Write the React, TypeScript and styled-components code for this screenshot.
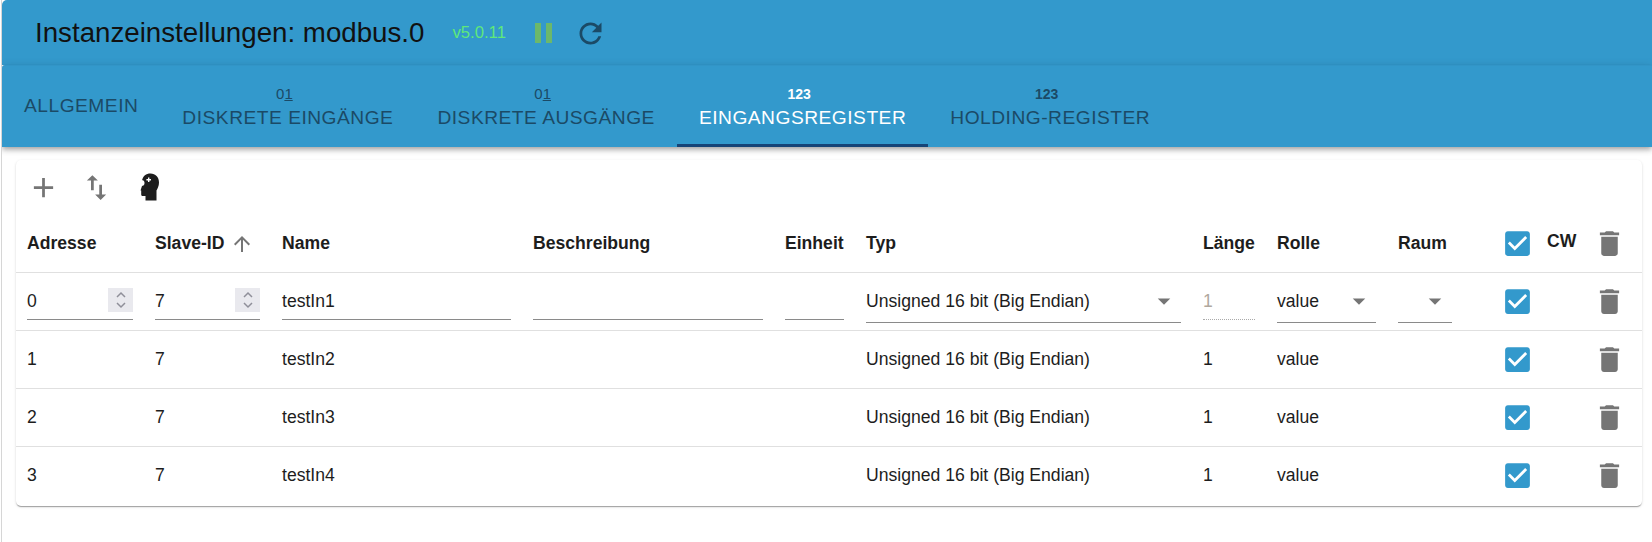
import * as React from 'react';
import styled, { createGlobalStyle } from 'styled-components';

const GlobalStyle = createGlobalStyle`
    html, body {
        margin: 0;
        padding: 0;
        background: #fff;
    }
    body {
        font-family: "Liberation Sans", Arial, sans-serif;
    }
`;

const PATHS = {
    refresh: 'M17.65 6.35C16.2 4.9 14.21 4 12 4c-4.42 0-7.99 3.58-7.99 8s3.57 8 7.99 8c3.73 0 6.84-2.55 7.73-6h-2.08c-.82 2.33-3.04 4-5.65 4-3.31 0-6-2.69-6-6s2.69-6 6-6c1.66 0 3.14.69 4.22 1.78L13 11h7V4l-2.35 2.35z',
    add: 'M19 13h-6v6h-2v-6H5v-2h6V5h2v6h6v2z',
    swap: 'M16 17.01V10h-2v7.01h-3L15 21l4-3.99h-3zM9 3L5 6.99h3V14h2V6.99h3L9 3z',
    arrowUp: 'M4 12l1.41 1.41L11 7.83V20h2V7.83l5.58 5.59L20 12l-8-8-8 8z',
    trash: 'M6 19c0 1.1.9 2 2 2h8c1.1 0 2-.9 2-2V7H6v12zM19 4h-3.5l-1-1h-5l-1 1H5v2h14V4z',
    checkbox: 'M19 3H5c-1.11 0-2 .9-2 2v14c0 1.1.89 2 2 2h14c1.1 0 2-.9 2-2V5c0-1.1-.9-2-2-2zm-9 14l-5-5 1.41-1.41L10 14.17l7.59-7.59L19 8l-9 9z',
    caret: 'M7 10l5 5 5-5z',
};

type IconProps = { d: string; size: number; color: string };

const Icon = ({ d, size, color }: IconProps) => (
    <svg width={size} height={size} viewBox="0 0 24 24" fill={color} style={{ display: 'block', flex: 'none' }}>
        <path d={d}/>
    </svg>
);

const HeadIcon = () => (
    <svg width="30" height="32" viewBox="0 0 30 32" style={{ display: 'block' }}>
        <path fill="#1d1d1d" d="M16.500 2.500c5 0 8.500 3.500 8.500 9 0 3.500-1.500 6-2.500 8V29.500H11.500V25H8.500c-.8 0-1.300-.7-1.300-1.500V19.500H6.500l1.500-4.500V9.500C9 5 12 2.500 16.500 2.500z"/>
        <circle cx="7.500" cy="12" r="3" fill="#fff"/>
        <path fill="#fff" d="M14 6.500h1.400V8H17v1.400h-1.600V11H14V9.400h-1.600V8H14z"/>
    </svg>
);

const COLUMNS = [128, 127, 251, 252, 81, 337, 74, 121, 103, 46, 46, 60];

const rows = [
    { address: 1, name: 'testIn2' },
    { address: 2, name: 'testIn3' },
    { address: 3, name: 'testIn4' },
];

const Trash = () => (
    <Icon d={PATHS.trash} size={33} color="#757575"/>
);

const Check = () => (
    <Icon d={PATHS.checkbox} size={33} color="#3399cc"/>
);

const Caret = () => (
    <StyledCaret><Icon d={PATHS.caret} size={30} color="#757575"/></StyledCaret>
);

const Stepper = () => (
    <StyledStepper>
        <svg width="12" height="20" viewBox="0 0 12 20" fill="none" stroke="#8f8f99" strokeWidth="1.500">
            <path d="M2 7l4-4 4 4M2 13l4 4 4-4"/>
        </svg>
    </StyledStepper>
);

export default function App() {
    return (
        <>
            <GlobalStyle/>
            <StyledRoot>
                <StyledHeader>
                    <StyledTitle>Instanzeinstellungen: modbus.0</StyledTitle>
                    <StyledVersion>v5.0.11</StyledVersion>
                    <StyledPause/>
                    <Icon d={PATHS.refresh} size={33} color="#1b4a66"/>
                </StyledHeader>
                <StyledTabs>
                    <StyledTab>ALLGEMEIN</StyledTab>
                    <StyledTab>
                        <StyledTabIcon>0<u>1</u></StyledTabIcon>
                        DISKRETE EINGÄNGE
                    </StyledTab>
                    <StyledTab>
                        <StyledTabIcon>0<u>1</u></StyledTabIcon>
                        DISKRETE AUSGÄNGE
                    </StyledTab>
                    <StyledTab $active>
                        <StyledTabIcon $bold>123</StyledTabIcon>
                        EINGANGSREGISTER
                    </StyledTab>
                    <StyledTab>
                        <StyledTabIcon $bold>123</StyledTabIcon>
                        HOLDING-REGISTER
                    </StyledTab>
                </StyledTabs>
                <StyledCard>
                    <StyledToolbar>
                        <StyledToolButton><Icon d={PATHS.add} size={33} color="#757575"/></StyledToolButton>
                        <StyledToolButton><Icon d={PATHS.swap} size={33} color="#757575"/></StyledToolButton>
                        <StyledToolButton><HeadIcon/></StyledToolButton>
                    </StyledToolbar>
                    <StyledTable>
                        <colgroup>
                            {COLUMNS.map((width, i) => <col key={i} width={width}/>)}
                        </colgroup>
                        <thead>
                            <tr>
                                <StyledHeadCell>Adresse</StyledHeadCell>
                                <StyledHeadCell>
                                    <StyledSort>
                                        Slave-ID
                                        <Icon d={PATHS.arrowUp} size={24} color="#757575"/>
                                    </StyledSort>
                                </StyledHeadCell>
                                <StyledHeadCell>Name</StyledHeadCell>
                                <StyledHeadCell>Beschreibung</StyledHeadCell>
                                <StyledHeadCell>Einheit</StyledHeadCell>
                                <StyledHeadCell>Typ</StyledHeadCell>
                                <StyledHeadCell>Länge</StyledHeadCell>
                                <StyledHeadCell>Rolle</StyledHeadCell>
                                <StyledHeadCell>Raum</StyledHeadCell>
                                <StyledHeadCell><Check/></StyledHeadCell>
                                <StyledHeadCell $raised>CW</StyledHeadCell>
                                <StyledHeadCell><Trash/></StyledHeadCell>
                            </tr>
                        </thead>
                        <tbody>
                            <tr>
                                <StyledCell><StyledField>0<Stepper/></StyledField></StyledCell>
                                <StyledCell><StyledField>7<Stepper/></StyledField></StyledCell>
                                <StyledCell><StyledField>testIn1</StyledField></StyledCell>
                                <StyledCell><StyledField/></StyledCell>
                                <StyledCell><StyledField/></StyledCell>
                                <StyledCell>
                                    <StyledField $select>
                                        Unsigned 16 bit (Big Endian)
                                        <Caret/>
                                    </StyledField>
                                </StyledCell>
                                <StyledCell><StyledField $disabled>1</StyledField></StyledCell>
                                <StyledCell>
                                    <StyledField $select>
                                        value
                                        <Caret/>
                                    </StyledField>
                                </StyledCell>
                                <StyledCell>
                                    <StyledField $select $width={54}>
                                        <Caret/>
                                    </StyledField>
                                </StyledCell>
                                <StyledCell><Check/></StyledCell>
                                <StyledCell/>
                                <StyledCell><Trash/></StyledCell>
                            </tr>
                            {rows.map(row => (
                                <tr key={row.address}>
                                    <StyledCell>{row.address}</StyledCell>
                                    <StyledCell>7</StyledCell>
                                    <StyledCell>{row.name}</StyledCell>
                                    <StyledCell/>
                                    <StyledCell/>
                                    <StyledCell>Unsigned 16 bit (Big Endian)</StyledCell>
                                    <StyledCell>1</StyledCell>
                                    <StyledCell>value</StyledCell>
                                    <StyledCell/>
                                    <StyledCell><Check/></StyledCell>
                                    <StyledCell/>
                                    <StyledCell><Trash/></StyledCell>
                                </tr>
                            ))}
                        </tbody>
                    </StyledTable>
                </StyledCard>
            </StyledRoot>
        </>
    );
}

const StyledRoot = styled.div`
    width: 1650px;
    height: 542px;
    margin-left: 1px;
    border-left: 1px solid #d6d6d6;
    overflow: hidden;
`;

const StyledHeader = styled.header`
    display: flex;
    align-items: center;
    height: 65px;
    padding: 1px 0 0 33px;
    box-sizing: border-box;
    background: #3399cc;
    border-top-left-radius: 5px;
`;

const StyledTitle = styled.h1`
    margin: 0;
    font-size: 27.7px;
    font-weight: 400;
    line-height: 1;
    color: #111;
`;

const StyledVersion = styled.span`
    margin-left: 28px;
    font-size: 16.7px;
    color: #5fe87a;
`;

const StyledPause = styled.span`
    width: 17px;
    height: 20px;
    margin: 0 22px 0 29px;
    border-left: 6px solid #6cb86a;
    border-right: 6px solid #6cb86a;
    box-sizing: border-box;
`;

const StyledTabs = styled.nav`
    display: flex;
    height: 82px;
    padding-top: 1px;
    box-sizing: border-box;
    background: #3399cc;
    border-top: 1px solid #3295c7;
    border-top-left-radius: 3px;
    box-shadow: 0 2px 4px -1px rgba(0, 0, 0, 0.2), 0 4px 5px 0 rgba(0, 0, 0, 0.14), 0 1px 10px 0 rgba(0, 0, 0, 0.12);
    position: relative;
`;

const StyledTab = styled.div<{ $active?: boolean }>`
    display: flex;
    flex-direction: column;
    align-items: center;
    justify-content: center;
    padding: 0 22px;
    font-size: 19.2px;
    letter-spacing: 0.5px;
    line-height: 24px;
    color: ${p => (p.$active ? '#fff' : '#1b4a66')};
    border-bottom: 3px solid ${p => (p.$active ? '#164477' : 'transparent')};
    box-sizing: border-box;
`;

const StyledTabIcon = styled.span<{ $bold?: boolean }>`
    margin-right: 7px;
    font-size: ${p => (p.$bold ? 14 : 15)}px;
    font-weight: ${p => (p.$bold ? 700 : 400)};
    letter-spacing: 0;
    line-height: 24px;
`;

const StyledCard = styled.main`
    margin: 13px 10px 0 14px;
    height: 346px;
    background: #fff;
    border-radius: 5px;
    box-shadow: 0 2px 1px -1px rgba(0, 0, 0, 0.2), 0 1px 1px 0 rgba(0, 0, 0, 0.14), 0 1px 3px 0 rgba(0, 0, 0, 0.12);
`;

const StyledToolbar = styled.div`
    display: flex;
    align-items: center;
    height: 54px;
    padding-left: 5px;
    gap: 9px;
`;

const StyledToolButton = styled.div`
    width: 44px;
    height: 44px;
    display: flex;
    align-items: center;
    justify-content: center;
`;

const StyledTable = styled.table`
    width: 100%;
    table-layout: fixed;
    border-collapse: collapse;
`;

const StyledHeadCell = styled.th<{ $raised?: boolean }>`
    height: 58px;
    padding: ${p => (p.$raised ? '0 11px 2px' : '2px 11px 0')};
    box-sizing: border-box;
    text-align: left;
    font-size: 17.6px;
    font-weight: 700;
    color: #1d1d1d;
    border-bottom: 1px solid #e0e0e0;
    white-space: nowrap;
`;

const StyledSort = styled.span`
    display: flex;
    align-items: center;
    gap: 6px;
`;

const StyledCell = styled.td`
    height: 58px;
    padding: 0 11px;
    box-sizing: border-box;
    font-size: 17.6px;
    color: #1d1d1d;
    border-bottom: 1px solid #e0e0e0;
    white-space: nowrap;
    tr:last-child > & {
        border-bottom: none;
    }
`;

const StyledField = styled.div<{ $select?: boolean; $disabled?: boolean; $width?: number }>`
    position: relative;
    height: 38px;
    width: ${p => (p.$width ? `${p.$width}px` : 'auto')};
    line-height: ${p => (p.$select ? 32 : 38)}px;
    margin-top: ${p => (p.$select ? 6 : 0)}px;
    box-sizing: border-box;
    border-bottom: 1px ${p => (p.$disabled ? 'dotted' : 'solid')} ${p => (p.$disabled ? '#aaa' : '#8a8a8a')};
    color: ${p => (p.$disabled ? '#b0a89e' : 'inherit')};
`;

const StyledStepper = styled.span`
    position: absolute;
    right: 0;
    top: 6px;
    width: 25px;
    height: 24px;
    display: flex;
    align-items: center;
    justify-content: center;
    background: #e9e9ee;
`;

const StyledCaret = styled.span`
    position: absolute;
    right: 2px;
    top: 1px;
`;
